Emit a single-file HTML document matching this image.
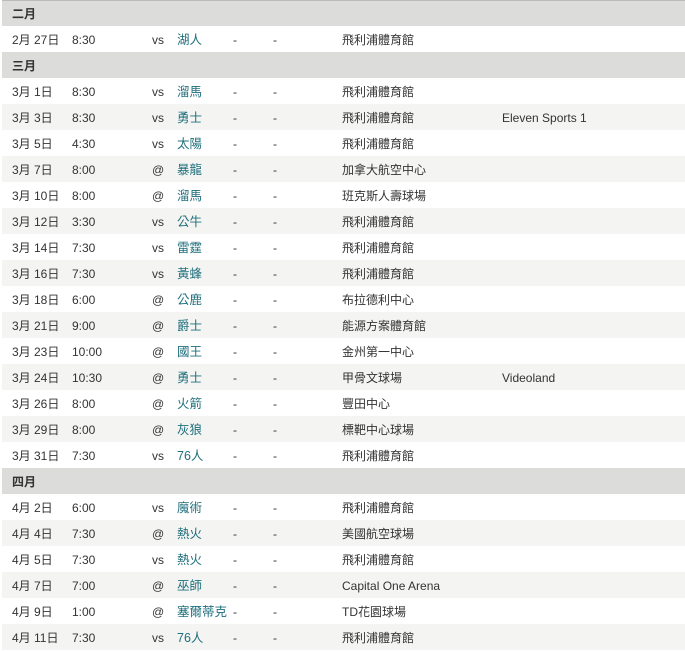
<!DOCTYPE html>
<html><head><meta charset="utf-8"><style>
body{margin:0;width:685px;height:647px;overflow:hidden;background:#fff;font-family:"Liberation Sans","Noto Sans CJK TC",sans-serif;font-size:12px;color:#333}
.w{position:absolute;left:2px;top:0;width:683px}
.r{position:relative;height:26px;line-height:26px}
.r span{position:absolute;white-space:nowrap;top:1px}
.h{background:#dcdcda;font-weight:bold;color:#333}
.h span{left:10px}
.s{background:#f4f4f3}
.a{left:10px}.b{left:70px}.c{left:150px}.d{left:175px;color:#1f6f7c;font-size:12.5px}.e{left:231px}.f{left:271px}.g{left:340px}.t{left:500px}
</style></head><body><div class="w">
<div class="r h" style="border-top:1px solid #bbb;height:25px"><span style="top:0">二月</span></div>
<div class="r"><span class="a">2月 27日</span><span class="b">8:30</span><span class="c">vs</span><span class="d">湖人</span><span class="e">-</span><span class="f">-</span><span class="g">飛利浦體育館</span></div>
<div class="r h"><span>三月</span></div>
<div class="r"><span class="a">3月 1日</span><span class="b">8:30</span><span class="c">vs</span><span class="d">溜馬</span><span class="e">-</span><span class="f">-</span><span class="g">飛利浦體育館</span></div>
<div class="r s"><span class="a">3月 3日</span><span class="b">8:30</span><span class="c">vs</span><span class="d">勇士</span><span class="e">-</span><span class="f">-</span><span class="g">飛利浦體育館</span><span class="t">Eleven Sports 1</span></div>
<div class="r"><span class="a">3月 5日</span><span class="b">4:30</span><span class="c">vs</span><span class="d">太陽</span><span class="e">-</span><span class="f">-</span><span class="g">飛利浦體育館</span></div>
<div class="r s"><span class="a">3月 7日</span><span class="b">8:00</span><span class="c">@</span><span class="d">暴龍</span><span class="e">-</span><span class="f">-</span><span class="g">加拿大航空中心</span></div>
<div class="r"><span class="a">3月 10日</span><span class="b">8:00</span><span class="c">@</span><span class="d">溜馬</span><span class="e">-</span><span class="f">-</span><span class="g">班克斯人壽球場</span></div>
<div class="r s"><span class="a">3月 12日</span><span class="b">3:30</span><span class="c">vs</span><span class="d">公牛</span><span class="e">-</span><span class="f">-</span><span class="g">飛利浦體育館</span></div>
<div class="r"><span class="a">3月 14日</span><span class="b">7:30</span><span class="c">vs</span><span class="d">雷霆</span><span class="e">-</span><span class="f">-</span><span class="g">飛利浦體育館</span></div>
<div class="r s"><span class="a">3月 16日</span><span class="b">7:30</span><span class="c">vs</span><span class="d">黃蜂</span><span class="e">-</span><span class="f">-</span><span class="g">飛利浦體育館</span></div>
<div class="r"><span class="a">3月 18日</span><span class="b">6:00</span><span class="c">@</span><span class="d">公鹿</span><span class="e">-</span><span class="f">-</span><span class="g">布拉德利中心</span></div>
<div class="r s"><span class="a">3月 21日</span><span class="b">9:00</span><span class="c">@</span><span class="d">爵士</span><span class="e">-</span><span class="f">-</span><span class="g">能源方案體育館</span></div>
<div class="r"><span class="a">3月 23日</span><span class="b">10:00</span><span class="c">@</span><span class="d">國王</span><span class="e">-</span><span class="f">-</span><span class="g">金州第一中心</span></div>
<div class="r s"><span class="a">3月 24日</span><span class="b">10:30</span><span class="c">@</span><span class="d">勇士</span><span class="e">-</span><span class="f">-</span><span class="g">甲骨文球場</span><span class="t">Videoland</span></div>
<div class="r"><span class="a">3月 26日</span><span class="b">8:00</span><span class="c">@</span><span class="d">火箭</span><span class="e">-</span><span class="f">-</span><span class="g">豐田中心</span></div>
<div class="r s"><span class="a">3月 29日</span><span class="b">8:00</span><span class="c">@</span><span class="d">灰狼</span><span class="e">-</span><span class="f">-</span><span class="g">標靶中心球場</span></div>
<div class="r"><span class="a">3月 31日</span><span class="b">7:30</span><span class="c">vs</span><span class="d">76人</span><span class="e">-</span><span class="f">-</span><span class="g">飛利浦體育館</span></div>
<div class="r h"><span>四月</span></div>
<div class="r"><span class="a">4月 2日</span><span class="b">6:00</span><span class="c">vs</span><span class="d">魔術</span><span class="e">-</span><span class="f">-</span><span class="g">飛利浦體育館</span></div>
<div class="r s"><span class="a">4月 4日</span><span class="b">7:30</span><span class="c">@</span><span class="d">熱火</span><span class="e">-</span><span class="f">-</span><span class="g">美國航空球場</span></div>
<div class="r"><span class="a">4月 5日</span><span class="b">7:30</span><span class="c">vs</span><span class="d">熱火</span><span class="e">-</span><span class="f">-</span><span class="g">飛利浦體育館</span></div>
<div class="r s"><span class="a">4月 7日</span><span class="b">7:00</span><span class="c">@</span><span class="d">巫師</span><span class="e">-</span><span class="f">-</span><span class="g">Capital One Arena</span></div>
<div class="r"><span class="a">4月 9日</span><span class="b">1:00</span><span class="c">@</span><span class="d">塞爾蒂克</span><span class="e">-</span><span class="f">-</span><span class="g">TD花園球場</span></div>
<div class="r s"><span class="a">4月 11日</span><span class="b">7:30</span><span class="c">vs</span><span class="d">76人</span><span class="e">-</span><span class="f">-</span><span class="g">飛利浦體育館</span></div>
</div></body></html>
